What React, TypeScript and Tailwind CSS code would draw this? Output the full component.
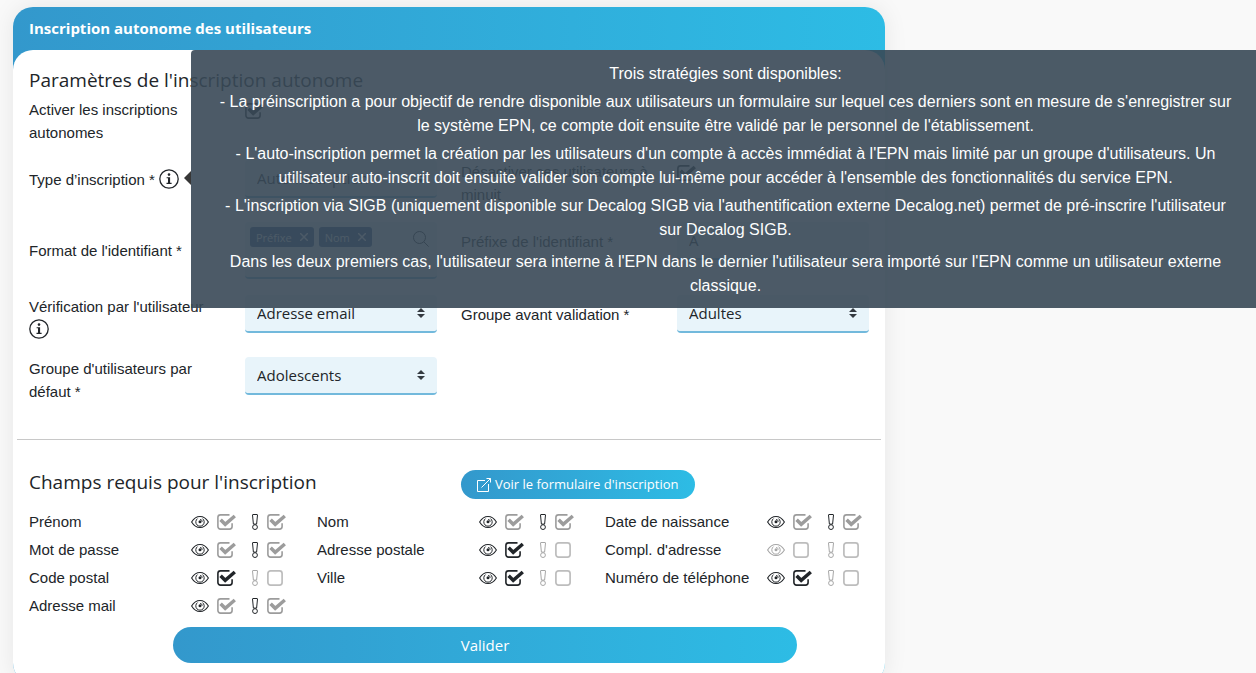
import { useState } from 'react';
import type { ReactNode } from 'react';

interface FieldFlag {
  checked: boolean;
  disabled?: boolean;
}

interface RequiredField {
  name: string;
  visible: FieldFlag;
  required: FieldFlag;
}

const locked: FieldFlag = { checked: true, disabled: true };
const on: FieldFlag = { checked: true };
const off: FieldFlag = { checked: false };

const FIELDS: RequiredField[] = [
  { name: 'Prénom', visible: locked, required: locked },
  { name: 'Nom', visible: locked, required: locked },
  { name: 'Date de naissance', visible: locked, required: locked },
  { name: 'Mot de passe', visible: locked, required: locked },
  { name: 'Adresse postale', visible: on, required: off },
  { name: "Compl. d'adresse", visible: off, required: off },
  { name: 'Code postal', visible: on, required: off },
  { name: 'Ville', visible: on, required: off },
  { name: 'Numéro de téléphone', visible: on, required: off },
  { name: 'Adresse mail', visible: locked, required: locked },
];

const InfoIcon = () => (
  <svg viewBox="0 0 20 20" className="inline-block h-5 w-5 align-[-4px]" fill="none" aria-hidden="true">
    <circle cx="10" cy="10" r="9.2" stroke="#212529" strokeWidth="1.3" />
    <circle cx="10" cy="5.6" r="1.3" fill="#212529" />
    <path d="M7.6 8.2h3.5v5.6h1.5v1.1H7.5v-1.1H9V9.3H7.6z" fill="#212529" />
  </svg>
);

const EyeIcon = () => (
  <svg viewBox="0 0 18 14" className="h-[14px] w-[18px] shrink-0" fill="none" stroke="currentColor" aria-hidden="true">
    <path d="M.6 7C2.800 3.400 5.600 1.500 9 1.500S15.200 3.400 17.400 7C15.200 10.600 12.400 12.500 9 12.500S2.800 10.600.6 7z" strokeWidth="1.100" />
    <path d="M6.500 3.600a4.200 4.200 0 1 0 5 0" strokeWidth="1" />
    <circle cx="9" cy="6.800" r="1.500" fill="currentColor" stroke="none" />
    <path d="M9 4.300a2.500 2.500 0 0 1 2.300 2.500" strokeWidth=".8" />
  </svg>
);

const ExclamationIcon = () => (
  <svg viewBox="0 0 6 16" className="h-4 w-[6px] shrink-0" fill="none" stroke="currentColor" strokeWidth="1" aria-hidden="true">
    <path d="M1 .5h4q.5 0 .5.5L4.600 10.100H1.400L.5 1Q.5.500 1 .500z" />
    <circle cx="3" cy="13.100" r="2.400" />
  </svg>
);

const CaretIcon = () => (
  <svg viewBox="0 0 8 10" className="pointer-events-none absolute right-3 top-[13px] h-[10px] w-2" fill="#343a40" aria-hidden="true">
    <path d="M4 0l4 4H0zM4 10L0 6h8z" />
  </svg>
);

const Checkbox = ({ label, flag }: { label: string; flag: FieldFlag }) => {
  const [checked, setChecked] = useState<boolean>(flag.checked);
  const color = !checked ? 'text-[#bdbdbd]' : flag.disabled ? 'text-[#9c9c9c]' : 'text-[#212529]';

  return (
    <span className={`relative inline-block h-4 w-5 shrink-0 ${color}`}>
      <input
        type="checkbox"
        aria-label={label}
        checked={checked}
        disabled={flag.disabled}
        onChange={(e) => setChecked(e.target.checked)}
        className="absolute inset-0 h-4 w-4 appearance-none rounded"
      />
      <svg viewBox="0 0 20 16" className="pointer-events-none absolute inset-0 h-4 w-5" fill="none" aria-hidden="true">
        {checked ? (
          <>
            <path
              d="M12.500.9H3.500A2.600 2.600 0 0 0 .9 3.500v9a2.600 2.600 0 0 0 2.600 2.600h9a2.600 2.600 0 0 0 2.600-2.600V9.200"
              stroke="currentColor"
              strokeWidth="1.600"
            />
            <path d="M3.600 5.700l4.600 4.600L17.800 2" stroke="currentColor" strokeWidth="3.500" />
          </>
        ) : (
          <rect x=".9" y=".9" width="14.200" height="14.200" rx="2.600" stroke="currentColor" strokeWidth="1.700" />
        )}
      </svg>
    </span>
  );
};

const Select = ({ id, value }: { id: string; value: string }) => (
  <div className="relative">
    <select
      id={id}
      defaultValue={value}
      className="block h-[38px] w-full appearance-none rounded border-b-2 border-[#72b9dc] bg-[#e8f4fa] px-3 font-['Open_Sans',sans-serif] text-[15px] text-[#212529]"
    >
      <option>{value}</option>
    </select>
    <CaretIcon />
  </div>
);

const Tag = ({ children }: { children: ReactNode }) => (
  <span className="flex h-5 items-center gap-2 rounded-[3px] bg-[#34588c] px-[6px] font-['Open_Sans',sans-serif] text-[11px] text-white">
    {children}
    <button type="button" aria-label="Retirer">
      <svg viewBox="0 0 8 8" className="h-2 w-2" stroke="currentColor" strokeWidth="1.500" aria-hidden="true">
        <path d="M0 0l8 8M8 0L0 8" />
      </svg>
    </button>
  </span>
);

const Tooltip = () => (
  <div role="tooltip" className="absolute left-[191px] right-0 top-[50px] opacity-90">
    <div className="absolute -left-[7px] top-[121px] h-0 w-0 border-y-[7px] border-r-[7px] border-y-transparent border-r-[#222]" />
    <div className="rounded-tl bg-[#394957] pb-[10px] pl-6 pr-5 pt-3 text-center text-base leading-6 text-white">
      <p className="mb-1">Trois stratégies sont disponibles:</p>
      <p className="mb-1">
        - La préinscription a pour objectif de rendre disponible aux utilisateurs un formulaire sur lequel ces derniers
        sont en mesure de s'enregistrer sur le système EPN, ce compte doit ensuite être validé par le personnel de
        l'établissement.
      </p>
      <p className="mb-1">
        - L'auto-inscription permet la création par les utilisateurs d'un compte à accès immédiat à l'EPN mais limité
        par un groupe d'utilisateurs. Un utilisateur auto-inscrit doit ensuite valider son compte lui-même pour accéder
        à l'ensemble des fonctionnalités du service EPN.
      </p>
      <p className="mb-2">
        - L'inscription via SIGB (uniquement disponible sur Decalog SIGB via l'authentification externe Decalog.net)
        permet de pré-inscrire l'utilisateur sur Decalog SIGB.
      </p>
      <p>
        Dans les deux premiers cas, l'utilisateur sera interne à l'EPN dans le dernier l'utilisateur sera importé sur
        l'EPN comme un utilisateur externe classique.
      </p>
    </div>
  </div>
);

const SettingsGrid = () => (
  <div className="flex flex-col gap-4 leading-[23px]">
    <div className="grid grid-cols-4">
      <div className="px-3">Activer les inscriptions autonomes</div>
      <div className="flex h-[26px] items-center px-3">
        <Checkbox label="Activer les inscriptions autonomes" flag={on} />
      </div>
    </div>

    <div className="grid grid-cols-4">
      <label htmlFor="type" className="px-3 pt-2">
        Type d’inscription * <InfoIcon />
      </label>
      <div className="px-3">
        <Select id="type" value="Auto-inscription" />
      </div>
      <div className="px-3">Désactiver ces utilisateurs à minuit</div>
      <div className="flex h-[26px] items-center px-3">
        <Checkbox label="Désactiver ces utilisateurs à minuit" flag={on} />
      </div>
    </div>

    <div className="grid grid-cols-4">
      <div className="flex items-center px-3">Format de l'identifiant *</div>
      <div className="px-3">
        <div className="flex h-[57px] items-start gap-[5px] rounded border-b-2 border-[#72b9dc] bg-[#e8f4fa] p-[5px]">
          <Tag>Préfixe</Tag>
          <Tag>Nom</Tag>
          <svg viewBox="0 0 16 16" className="ml-auto mr-[3px] mt-1 h-4 w-4" fill="none" stroke="#212529" aria-hidden="true">
            <circle cx="6.500" cy="6.500" r="6" />
            <path d="M10.800 10.800l4.800 4.800" />
          </svg>
        </div>
      </div>
      <label htmlFor="prefix" className="flex h-[38px] items-center px-3">
        Préfixe de l'identifiant *
      </label>
      <div className="px-3">
        <input
          id="prefix"
          type="text"
          defaultValue="A"
          className="block h-[38px] w-full rounded border-b-2 border-[#72b9dc] bg-[#e8f4fa] px-3 font-['Open_Sans',sans-serif] text-[15px]"
        />
      </div>
    </div>

    <div className="grid grid-cols-4">
      <label htmlFor="verification" className="px-3">
        Vérification par l'utilisateur <InfoIcon />
      </label>
      <div className="px-3">
        <Select id="verification" value="Adresse email" />
      </div>
      <label htmlFor="before" className="flex h-[38px] items-center px-3">
        Groupe avant validation *
      </label>
      <div className="px-3">
        <Select id="before" value="Adultes" />
      </div>
    </div>

    <div className="grid grid-cols-4">
      <label htmlFor="group" className="px-3">
        Groupe d'utilisateurs par défaut *
      </label>
      <div className="px-3">
        <Select id="group" value="Adolescents" />
      </div>
    </div>
  </div>
);

const FieldRow = ({ field }: { field: RequiredField }) => (
  <div className="flex h-7 items-center px-3">
    <span className="w-[162px] shrink-0">{field.name}</span>
    <span className={`mr-2 ${field.visible.checked ? '' : 'text-[#a6a6a6]'}`}>
      <EyeIcon />
    </span>
    <Checkbox label={`${field.name} visible`} flag={field.visible} />
    <span className={`ml-[15px] mr-[9px] ${field.required.checked ? '' : 'text-[#a6a6a6]'}`}>
      <ExclamationIcon />
    </span>
    <Checkbox label={`${field.name} obligatoire`} flag={field.required} />
  </div>
);

const App = () => {
  return (
    <div className="relative min-h-screen overflow-hidden bg-[#f9f9f9] pl-[13px] pt-[7px] font-['Liberation_Sans',Arial,sans-serif] text-[15px] text-[#212529]">
      <main className="w-full max-w-[872px] rounded-[20px] bg-linear-to-r from-[#3398cc] to-[#2dbce5] shadow-[0_0_24px_rgba(0,0,0,0.08)]">
        <h1 className="flex h-[43px] items-center px-4 font-['Open_Sans',sans-serif] text-[15px] font-bold text-white">
          Inscription autonome des utilisateurs
        </h1>
        <form className="rounded-[20px] bg-white px-1 pb-5 pt-4" onSubmit={(e) => e.preventDefault()}>
          <h2 className="mb-1 px-3 font-['Open_Sans',sans-serif] text-[19px] leading-7">
            Paramètres de l'inscription autonome
          </h2>
          <SettingsGrid />

          <hr className="mt-9 border-[#c8c8c8]" />

          <div className="mt-[30px] grid grid-cols-2 items-start">
            <h2 className="px-3 font-['Open_Sans',sans-serif] text-[19px] leading-6">Champs requis pour l'inscription</h2>
            <div className="px-3">
              <button
                type="button"
                className="flex h-[29px] items-center gap-1 rounded-full bg-linear-to-r from-[#3398cc] to-[#2dbce5] px-4 font-['Open_Sans',sans-serif] text-[13px] text-white"
              >
                <svg viewBox="0 0 14 14" className="h-[14px] w-[14px]" fill="none" stroke="currentColor" aria-hidden="true">
                  <path d="M8 2.500H.5v11h11V6M4.500 9.500l9-9M9.500.5h4v4" />
                </svg>
                Voir le formulaire d'inscription
              </button>
            </div>
          </div>

          <div className="mt-[9px] grid grid-cols-3">
            {FIELDS.map((field) => (
              <FieldRow key={field.name} field={field} />
            ))}
          </div>

          <div className="mt-[7px] grid grid-cols-12">
            <div className="col-span-9 col-start-3 px-3">
              <button
                type="submit"
                className="h-9 w-full rounded-full bg-linear-to-r from-[#3398cc] to-[#2dbce5] font-['Open_Sans',sans-serif] text-[15px] text-white"
              >
                Valider
              </button>
            </div>
          </div>
        </form>
      </main>
      <Tooltip />
    </div>
  );
};

export default App;
